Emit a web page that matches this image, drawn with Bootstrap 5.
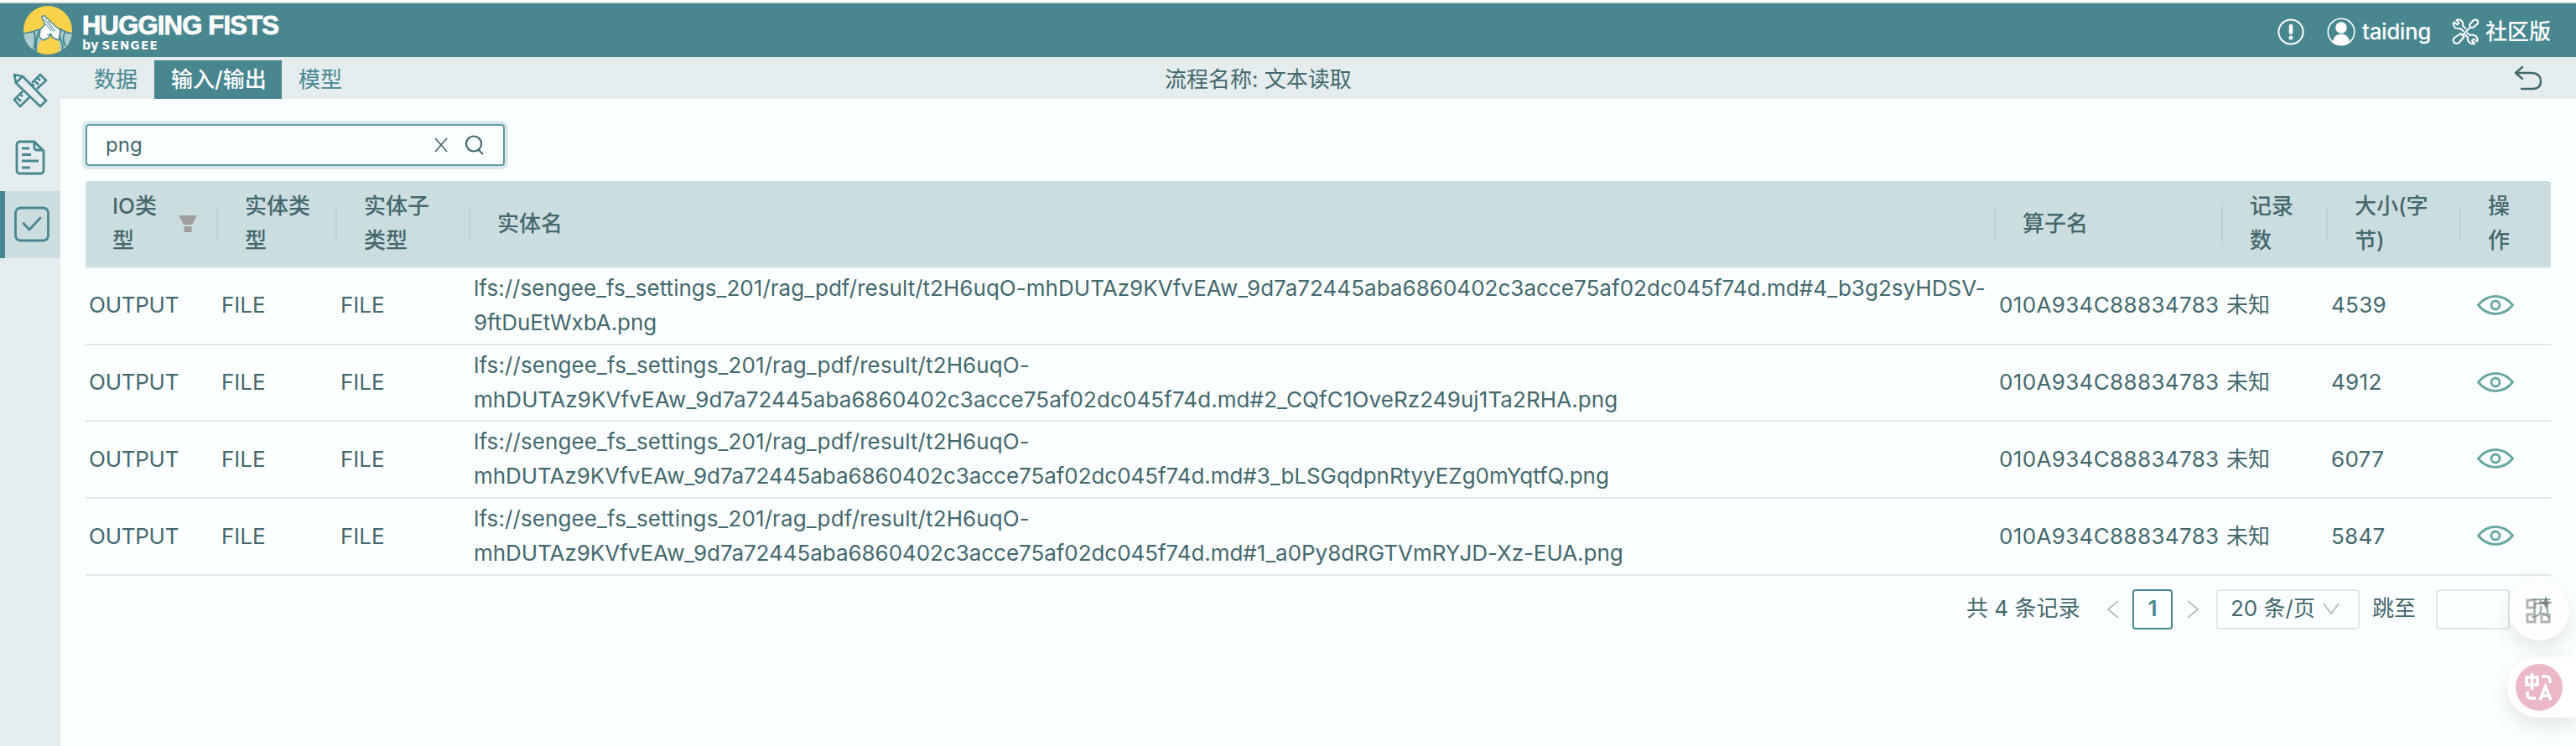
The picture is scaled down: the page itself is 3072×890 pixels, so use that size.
<!DOCTYPE html>
<html lang="zh-CN">
<head>
    <meta charset="UTF-8">
    <meta name="viewport" content="width=device-width, initial-scale=1.0">
    <title>HUGGING FISTS</title>
    <link href="https://cdn.jsdelivr.net/npm/bootstrap@5.3.0/dist/css/bootstrap.min.css" rel="stylesheet">
    <style>
        body {
            font-family: Inter, 'Noto Sans CJK SC', sans-serif;
            font-size: 26px;
            line-height: 40.86px;
            color: #44686c;
            background-color: #fcffff;
            height: 890px;
            overflow: hidden;
        }
        svg {
            display: block;
            flex: none;
        }
        .topbar {
            height: 66px;
            background-color: #488790;
            border-top: 2px solid #dcdedd;
            padding: 0 30px 0 27px;
            color: #fff;
        }
        .topbar-strip {
            height: 2px;
            background-color: #fcfefe;
        }
        .logo-title {
            font: bold 31px/30px 'Liberation Sans', sans-serif;
            letter-spacing: -0.8px;
            -webkit-text-stroke: 0.8px #fff;
        }
        .logo-by {
            font: bold 16px/14px 'Open Sans', sans-serif;
        }
        .logo-by span {
            font: bold 13.5px/14px 'DejaVu Sans', sans-serif;
            letter-spacing: 1.3px;
        }
        .sidebar {
            width: 72px;
            background-color: #e4ecee;
        }
        .side-item {
            height: 80px;
            border-left: 6px solid transparent;
        }
        .side-item.active {
            background-color: #ccdde0;
            border-color: #488790;
        }
        .subbar {
            height: 50px;
            background-color: #e4ecee;
        }
        .tab-item {
            height: 46px;
            line-height: 46px;
            padding: 0 20px;
            color: #488790;
        }
        .tab-item.active {
            width: 152px;
            white-space: nowrap;
            background-color: #488790;
            color: #fff;
            font-weight: 500;
        }
        .search-box {
            width: 500px;
            height: 50px;
            border: 2px solid #5f9aa1;
            border-radius: 4px;
            box-shadow: 0 0 0 4px #dae8ea;
            padding: 0 22px;
            font-size: 24px;
        }
        .io-table {
            table-layout: fixed;
            width: 2940px;
            border-collapse: separate;
            border-spacing: 0;
        }
        .io-table th {
            height: 104px;
            position: relative;
            background-color: #ccdde0;
            border-bottom: 2px solid #dfe9ea;
            font-weight: 500;
            padding: 9px 32px;
        }
        .io-table th:first-child { border-top-left-radius: 4px; }
        .io-table th:last-child { border-top-right-radius: 4px; }
        .io-table th:not(:last-child)::after {
            content: "";
            position: absolute;
            right: 0;
            top: 30px;
            width: 2px;
            height: 42px;
            background-color: #bfd1d4;
        }
        .io-table td {
            padding: 4px;
            border-bottom: 2px solid #dfe9ea;
            vertical-align: middle;
            white-space: nowrap;
        }
        .io-table td:first-child { letter-spacing: -0.25px; }
        .io-table td:nth-child(5) { letter-spacing: 0.35px; }
        .io-table td:nth-child(7) { letter-spacing: 0.3px; }
        .path-head { letter-spacing: 0.11px; }
        .path-full { letter-spacing: 0.03px; }
        .path-tail { letter-spacing: -0.05px; }
        tr:nth-child(2) .path-tail { letter-spacing: 0.09px; }
        .page-num, .page-size, .page-jump {
            height: 48px;
            border: 2px solid #dfe9ea;
            border-radius: 4px;
        }
        .page-num {
            width: 48px;
            border-color: #488790;
            color: #488790;
            font-weight: 600;
        }
        .page-size { width: 171px; }
        .page-jump { width: 88px; }
        .float-ai {
            position: absolute;
            left: 2992px;
            top: 692px;
            width: 72px;
            height: 72px;
            border-radius: 50%;
            background-color: rgba(255, 255, 255, .4);
            box-shadow: 0 10px 24px rgba(0, 0, 0, .1);
        }
        .float-trans {
            position: absolute;
            right: 0;
            top: 784px;
            width: 82px;
            height: 72px;
            padding-left: 10px;
            border-radius: 36px 0 0 36px;
            background-color: #fff;
            box-shadow: 0 10px 24px rgba(0, 0, 0, .1);
        }
    </style>
</head>
<body class="position-relative">
    <div class="topbar-strip"></div>
    <header class="topbar d-flex align-items-center justify-content-between">
        <div class="d-flex align-items-center">
            <svg width="60" height="60" viewBox="0 0 60 60">
                <circle cx="30" cy="30" r="29" fill="#f8d24a"/>
                <path d="M1 34q10-1 20-5l3 9q-6 9-7 18A29 29 0 0 1 1 34z" fill="#abcdd0"/>
                <path d="M59 34q-8-1-15-6l-3 10q4 9 3 18A29 29 0 0 0 59 34z" fill="#abcdd0"/>
                <path d="M1 34q10-1 19-5M59 34q-8-1-15-6" fill="none" stroke="#488790" stroke-width="1.6"/>
                <path d="M14 32q2 10-1 22M20 30q-5 12-4 26M46 30q-4 6 0 13 3 6 1 12M51 32q-5 7 0 17" fill="none" stroke="#488790" stroke-width="2"/>
                <path d="M21 29l6-6-4-8q0-3 3-2l14 13 5 4-2 12-7-3-3-5-2 5-7 3-4-4z" fill="#fff" stroke="#488790" stroke-width="1.5" stroke-linejoin="round"/>
                <path d="M26 16l11 16M30 19l9 12M28 23l6 8M29 35l4 2" fill="none" stroke="#488790"/>
            </svg>
            <div class="pt-1" style="margin-left:11px">
                <div class="logo-title">HUGGING FISTS</div>
                <div class="logo-by">by <span>SENGEE</span></div>
            </div>
        </div>
        <div class="d-flex align-items-center pt-1" style="height:60px">
            <svg width="32" height="32" viewBox="0 0 32 32" fill="none" stroke="#fff" stroke-width="2"><circle cx="16" cy="16" r="14.600"/><path d="M16 9v8" stroke-width="4.500" stroke-linecap="round"/><circle cx="16" cy="23" r="2.500" fill="#fff" stroke="none"/></svg>
            <svg style="margin:0 8px 0 27px" width="34" height="34" viewBox="0 0 34 34"><circle cx="17" cy="17" r="15.800" fill="none" stroke="#fff" stroke-width="1.600"/><circle cx="17" cy="12" r="6.800" fill="#fff"/><path d="M7 30c0-14 20-14 20 0q-10 6-20 0z" fill="#fff"/></svg>
            <span class="fw-medium" style="letter-spacing:-.4px">taiding</span>
            <svg style="margin:0 8px 0 25px" width="32" height="32" viewBox="0 0 32 32" fill="none" stroke="#fff" stroke-width="2" stroke-linejoin="round" stroke-linecap="round">
                <path d="M13.500 15L10 12Q4 13 2.500 9 1 6 2.500 4.500l4 3 2-2-3-3.500Q10 0 12.500 4q1 2 .5 5l3.500 3M18.500 17.500L21.500 20q5-1.500 8 2 2 3 .5 5.500l-4-3-2 2 3 3.500q-5 1-7.500-3-1-2-.5-4.500L16 19.500"/>
                <path d="M10.500 18l4 4-6 7q-3 2-6-.5-2-3 .5-5.500zM12.500 20L22 10.500M22 10.500l-1-3L26 2q3-1 4.500.5Q32 4 30.500 6.500L25 11z"/>
            </svg>
            <span class="fw-medium">社区版</span>
        </div>
    </header>
    <div class="d-flex" style="height:822px">
        <aside class="sidebar flex-shrink-0">
            <div class="side-item d-flex align-items-center">
                <svg style="margin-left:9px" width="42" height="42" viewBox="0 0 42 42" fill="none" stroke="#488790" stroke-width="2.600" stroke-linejoin="round"><path d="M2 2l10 2 28 29-7 7L4 12zM4 12l8-8M23 12L33 2l7 7-11 10M26 9l5 5M30 6l3 3M23 13l3 3M12 22L2 32l7 8 11-11M5 29l5 5M9 25l3 3"/></svg>
            </div>
            <div class="side-item d-flex align-items-center">
                <svg style="margin-left:12px" width="36" height="42" viewBox="0 0 36 42" fill="none" stroke="#488790" stroke-width="2.800" stroke-linejoin="round"><path d="M23 2H6Q2 2 2 6v30q0 4 4 4h24q4 0 4-4V13zM23 2v7q0 3 3 3h8M8 10h9M8 17.500h11M8 25h20M8 33h10"/></svg>
            </div>
            <div class="side-item active d-flex align-items-center">
                <svg style="margin-left:10px" width="44" height="44" viewBox="0 0 44 44" fill="none" stroke="#488790" stroke-width="2.800"><rect x="2.500" y="2" width="39" height="39" rx="6"/><path d="M12 20.500l7 7.500 13-14" stroke-linecap="round" stroke-linejoin="round"/></svg>
            </div>
        </aside>
        <main class="flex-grow-1">
            <div class="subbar d-flex justify-content-between align-items-end">
                <nav class="d-flex" style="padding-left:20px;width:1317px">
                    <div class="tab-item">数据</div>
                    <div class="tab-item active">输入/输出</div>
                    <div class="tab-item">模型</div>
                </nav>
                <div class="tab-item px-0 me-auto" style="color:#44686c">流程名称: 文本读取</div>
                <svg style="margin:0 41px 9px 0" width="34" height="32" viewBox="0 0 34 32" fill="none" stroke="#44686c" stroke-width="2.400" stroke-linecap="round" stroke-linejoin="round"><path d="M10 3L2 10l8 7M2 10h20q10 1 10 10t-10 9H9"/></svg>
            </div>
            <div style="padding:30px 30px 0 30px">
                <div class="search-box d-flex align-items-center">
                    <span class="me-auto">png</span>
                    <svg width="16" height="18" viewBox="0 0 16 18" stroke="#44686c" stroke-width="1.700"><path d="M1 1l14 16M15 1L1 17"/></svg>
                    <svg style="margin-left:20px" width="24" height="24" viewBox="0 0 24 24" fill="none" stroke="#44686c" stroke-width="2.200"><circle cx="11" cy="10.500" r="9"/><path d="M16 17l6 6"/></svg>
                </div>
                <table class="io-table" style="margin-top:18px">
                    <colgroup>
                        <col style="width:158px"><col style="width:142px"><col style="width:159px"><col style="width:1819px"><col style="width:271px"><col style="width:125px"><col style="width:159px"><col style="width:107px">
                    </colgroup>
                    <thead>
                        <tr>
                            <th>
                                <div class="d-flex align-items-center justify-content-between" style="margin-right:-7px">
                                    <span>IO类<br>型</span>
                                    <svg width="22" height="20" viewBox="0 0 22 20" fill="#9e9e9e"><path d="M0 0h22l-6 11H6zM6.500 13h9v7h-9z"/></svg>
                                </div>
                            </th>
                            <th>实体类<br>型</th>
                            <th>实体子<br>类型</th>
                            <th>实体名</th>
                            <th>算子名</th>
                            <th>记录<br>数</th>
                            <th>大小(字<br>节)</th>
                            <th>操<br>作</th>
                        </tr>
                    </thead>
                    <tbody id="ioRows"></tbody>
                </table>
                <div class="d-flex align-items-center text-nowrap" style="margin:16px 0 0 2243px">
                    <span class="flex-shrink-0" style="width:167px">共 4 条记录</span>
                    <svg width="15" height="22" viewBox="0 0 15 22" fill="none" stroke="#b9bfc0" stroke-width="2"><path d="M14 1L2 11l12 10"/></svg>
                    <span class="page-num flex-shrink-0 d-flex align-items-center justify-content-center" style="margin:0 17px 0 16px">1</span>
                    <svg width="15" height="22" viewBox="0 0 15 22" fill="none" stroke="#b9bfc0" stroke-width="2"><path d="M1 1l12 10L1 21"/></svg>
                    <span class="page-size flex-shrink-0 d-flex align-items-center justify-content-between" style="margin:0 15px 0 20px;padding:0 22px 0 15px">20 条/页
                        <svg width="20" height="15" viewBox="0 0 20 15" fill="none" stroke="#b9bfc0" stroke-width="2"><path d="M1 1l9 12 9-12"/></svg>
                    </span>
                    <span>跳至</span>
                    <span class="page-jump flex-shrink-0" style="margin:0 24px 0 24px"></span>
                    <span>页</span>
                </div>
            </div>
        </main>
    </div>
    <div class="float-ai d-flex align-items-center justify-content-center">
        <svg width="34" height="34" viewBox="0 0 34 34" fill="none" stroke="#8a8a8a" stroke-opacity=".65" stroke-width="3"><rect x="3" y="5" width="9" height="9"/><rect x="3" y="22" width="9" height="9"/><rect x="20" y="22" width="9" height="9"/><path d="M25 0l2 6 6 2-6 2-2 6-2-6-6-2 6-2z" fill="#777" fill-opacity=".85" stroke="none"/></svg>
    </div>
    <div class="float-trans d-flex align-items-center">
        <svg width="56" height="56" viewBox="0 0 56 56" fill="none" stroke="#fff" stroke-width="3.500"><circle cx="28" cy="28" r="28" fill="#ebb8c6" stroke="none"/><path d="M13 16h13v9H13zM19.500 11v20M31 15h5q5 0 5 5v3M14 33v4q0 4 5 4h5M29 43l6.500-16L42 43M31 38h9"/></svg>
    </div>

    <script>
        const prefix = 'lfs://sengee_fs_settings_201/rag_pdf/result/t2H6uqO-';
        const hash = 'mhDUTAz9KVfvEAw_9d7a72445aba6860402c3acce75af02dc045f74d.md#';
        const rows = [
            [prefix + hash + '4_b3g2syHDSV-', '9ftDuEtWxbA.png', 4539],
            [prefix, hash + '2_CQfC1OveRz249uj1Ta2RHA.png', 4912],
            [prefix, hash + '3_bLSGqdpnRtyyEZg0mYqtfQ.png', 6077],
            [prefix, hash + '1_a0Py8dRGTVmRYJD-Xz-EUA.png', 5847]
        ];
        document.getElementById('ioRows').innerHTML = rows.map(r => `
            <tr>
                <td>OUTPUT</td>
                <td>FILE</td>
                <td>FILE</td>
                <td><span class="${r[0] === prefix ? 'path-head' : 'path-full'}">${r[0]}</span><br><span class="path-tail">${r[1]}</span></td>
                <td>010A934C88834783</td>
                <td>未知</td>
                <td>${r[2]}</td>
                <td>
                    <svg style="margin:0 0 2px 15px" width="44" height="24" viewBox="0 0 44 24" fill="none" stroke="#67a6a2" stroke-width="2.800"><path d="M1.500 12Q10 1.500 22 1.500T42.500 12Q34 22.500 22 22.500T1.500 12z"/><circle cx="22" cy="12" r="5"/></svg>
                </td>
            </tr>`).join('');
    </script>
    <script src="https://cdn.jsdelivr.net/npm/bootstrap@5.3.0/dist/js/bootstrap.bundle.min.js"></script>
</body>
</html>
